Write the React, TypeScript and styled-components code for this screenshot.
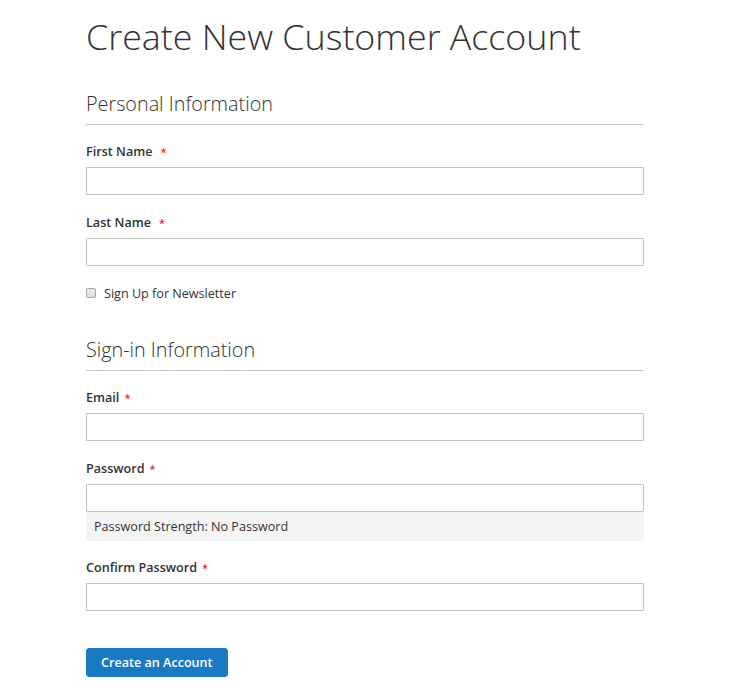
import React from 'react';
import styled, { createGlobalStyle } from 'styled-components';

const GlobalStyle = createGlobalStyle`
  body {
    margin: 0;
    background: #fff;
    font-family: "Open Sans", "Liberation Sans", sans-serif;
    color: #333;
  }
`;

const Page = styled.div`
  width: 558px;
  padding: 14px 0 20px 86px;
`;

const PageTitle = styled.h1`
  margin: 0 0 31px;
  font-size: 35.8px;
  line-height: 44px;
  font-weight: 300;
  color: #333;
`;

const Fieldset = styled.fieldset<{ $gap?: number }>`
  border: 0;
  margin: 0 0 ${(p) => p.$gap ?? 0}px;
  padding: 0;
  min-width: 0;
`;

const SectionTitle = styled.div`
  font-size: 19.8px;
  line-height: 28px;
  font-weight: 300;
  padding: 1px 0 6px;
  border-bottom: 1px solid #c6c6c6;
  margin-bottom: 16px;
`;

const Field = styled.div<{ $space?: number }>`
  margin-bottom: ${(p) => p.$space ?? 17}px;
`;

const Label = styled.label`
  display: block;
  height: 20px;
  padding-top: 1px;
  font-size: 12.6px;
  line-height: 20px;
  font-weight: 600;
  margin-bottom: 5px;
`;

const Required = styled.span<{ $offset?: number }>`
  color: #e02b27;
  font-size: 11px;
  line-height: 1;
  margin-left: ${(p) => p.$offset ?? 5}px;
`;

const Input = styled.input`
  display: block;
  box-sizing: border-box;
  width: 100%;
  height: 28px;
  margin: 0;
  padding: 0 9px;
  border: 1px solid #c2c2c2;
  border-radius: 1px;
  background: #fff;
  font-family: inherit;
  font-size: 12.6px;
  outline: none;
`;

const Strength = styled.div`
  height: 29px;
  padding: 0 8px;
  background: #f4f4f4;
  font-size: 12.6px;
  line-height: 29px;
`;

const CheckRow = styled.label`
  display: flex;
  align-items: center;
  height: 20px;
  font-size: 12.6px;
  gap: 8px;
`;

const CheckBox = styled.input`
  appearance: none;
  box-sizing: border-box;
  width: 10px;
  height: 10px;
  margin: 0;
  border: 1px solid #a9a9a9;
  border-radius: 2px;
  background: linear-gradient(#ededed, #dcdcdc);
`;

const Actions = styled.div`
  margin-top: 20px;
`;

const PrimaryButton = styled.button`
  height: 29px;
  padding: 0 14px;
  border: 1px solid #1979c3;
  border-radius: 3px;
  background: #1979c3;
  color: #fff;
  font-family: inherit;
  font-size: 12.6px;
  font-weight: 600;
  cursor: pointer;
`;

interface FieldProps {
  label: string;
  type?: string;
  offset?: number;
  space?: number;
  children?: React.ReactNode;
}

const FormField: React.FC<FieldProps> = ({ label, type = 'text', offset, space, children }) => (
  <Field $space={space}>
    <Label>
      {label}
      <Required $offset={offset}>*</Required>
    </Label>
    <Input type={type} />
    {children}
  </Field>
);

export default function App() {
  return (
    <Page>
      <GlobalStyle />
      <PageTitle>Create New Customer Account</PageTitle>
      <Fieldset $gap={32}>
        <SectionTitle>Personal Information</SectionTitle>
        <FormField label="First Name" offset={8} />
        <FormField label="Last Name" offset={8} />
        <CheckRow>
          <CheckBox type="checkbox" />
          Sign Up for Newsletter
        </CheckRow>
      </Fieldset>
      <Fieldset>
        <SectionTitle>Sign-in Information</SectionTitle>
        <FormField label="Email" type="email" />
        <FormField label="Password" type="password" space={16}>
          <Strength>Password Strength: No Password</Strength>
        </FormField>
        <FormField label="Confirm Password" type="password" />
      </Fieldset>
      <Actions>
        <PrimaryButton type="button">Create an Account</PrimaryButton>
      </Actions>
    </Page>
  );
}
